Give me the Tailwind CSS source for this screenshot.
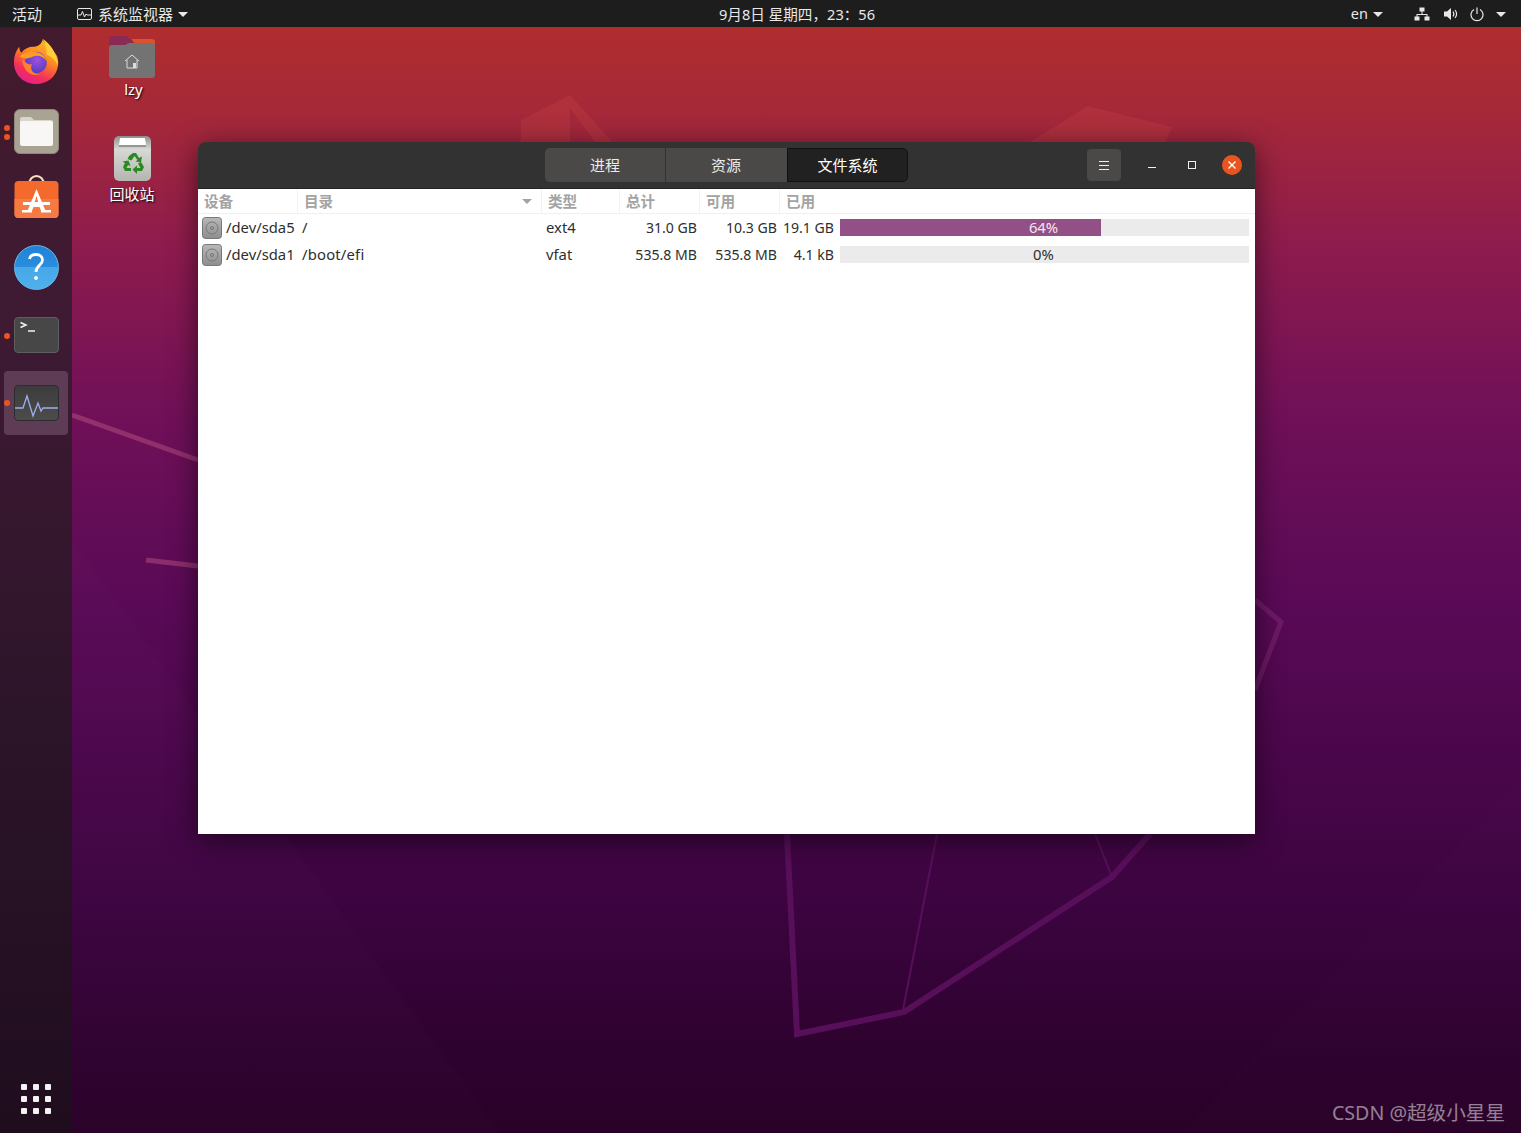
<!DOCTYPE html>
<html lang="zh-CN">
<head>
  <meta charset="UTF-8">
  <meta name="viewport" content="width=device-width, initial-scale=1">
  <title>系统监视器</title>
  <script src="https://cdn.jsdelivr.net/npm/@tailwindcss/browser@4"></script>
</head>
<body class="m-0 overflow-hidden">
<div class="relative w-[1521px] h-[1133px] overflow-hidden flex flex-col font-['Noto_Sans','Noto_Sans_CJK_SC',sans-serif] bg-[linear-gradient(180deg,#b42f2b_0px,#a4283a_120px,#8d1b4e_250px,#6f1058_420px,#5a0a56_600px,#480649_780px,#3c0440_900px,#2f0230_1040px,#290128_1133px)]">

  <!-- wallpaper lines -->
  <svg class="absolute inset-0" width="1521" height="1133" viewBox="0 0 1521 1133" fill="none">
    <path d="M521 142V120L570 95L612 142H595L570 108V142Z" fill="#c03c42" fill-opacity=".38"/>
    <path d="M1030 142L1088 106L1172 127L1165 142Z" fill="#c03c42" fill-opacity=".38"/>
    <path d="M72 415L198 460" stroke="#b04a80" stroke-opacity=".55" stroke-width="5"/>
    <path d="M146 560L198 566" stroke="#b04a80" stroke-opacity=".55" stroke-width="5"/>
    <path d="M1255 600L1281 622L1255 690" stroke="#8a2c7a" stroke-opacity=".45" stroke-width="5"/>
    <path d="M787 834L797 1034L904 1012L1112 877L1150 834" stroke="#580f5a" stroke-width="6"/>
    <path d="M937 834L903 1010" stroke="#580f5a" stroke-width="2"/>
    <path d="M1095 834L1112 877" stroke="#580f5a" stroke-width="2"/>
    <path d="M72 540L500 1133H72Z" fill="#fff" fill-opacity=".012"/>
    <path d="M1521 780L1180 1133H1521Z" fill="#fff" fill-opacity=".008"/>
  </svg>

  <!-- top bar -->
  <header class="relative z-10 h-[27px] pt-px bg-[#1d1d1d] text-[#e8e8e8] text-[15px] flex items-center shrink-0">
    <div class="w-[719px] flex items-center pl-3">
      <span>活动</span>
      <svg class="ml-[34px]" width="17" height="15" viewBox="0 0 17 15" fill="none" stroke="#e8e8e8">
        <rect x="1.5" y="1.5" width="14" height="11" rx="1.5"/>
        <path d="M1.5 8H5L6.5 4.5L8.5 10L10 7L11 8H15.5" stroke-width="1"/>
      </svg>
      <span class="ml-[5px]">系统监视器</span>
      <span class="ml-[5px] w-0 h-0 border-x-[5px] border-x-transparent border-t-[5px] border-t-[#e8e8e8]"></span>
    </div>
    <div class="mt-px whitespace-nowrap text-[14.6px]">9月8日 星期四，23：56</div>
    <div class="ml-auto flex items-center pr-[15px] text-[14.5px]">
      <span>en</span>
      <span class="ml-[5px] w-0 h-0 border-x-[5px] border-x-transparent border-t-[5px] border-t-[#e8e8e8]"></span>
      <svg class="ml-[31px]" width="16" height="14" viewBox="0 0 16 14" fill="#e8e8e8">
        <rect x="5.5" y="0.5" width="5" height="4"/><rect x="0.5" y="9.5" width="5" height="4"/><rect x="10.5" y="9.5" width="5" height="4"/>
        <path d="M7.5 4h1v3H13.5v3h-1V8h-9v2h-1V7h5z"/>
      </svg>
      <svg class="ml-[13px]" width="16" height="14" viewBox="0 0 16 14" fill="none">
        <path d="M1 4.5H4L8 1V13L4 9.5H1Z" fill="#e8e8e8"/>
        <path d="M10 4.5C11 6 11 8 10 9.5M12 3C14 5.5 14 8.5 12 11" stroke="#e8e8e8" stroke-width="1.2"/>
      </svg>
      <svg class="ml-[11px]" width="14" height="15" viewBox="0 0 14 15" fill="none" stroke="#e8e8e8" stroke-width="1.2">
        <path d="M4 2.5A6 6 0 1 0 10 2.5"/><path d="M7 0.5V7"/>
      </svg>
      <span class="ml-[12px] w-0 h-0 border-x-[5px] border-x-transparent border-t-[5px] border-t-[#e8e8e8]"></span>
    </div>
  </header>

  <div class="relative flex-1 flex min-h-0">
    <!-- dock -->
    <nav class="relative z-10 w-[72px] h-full pt-[2px] flex flex-col items-center bg-[linear-gradient(180deg,#431a2d_0px,#3e1a33_300px,#2c1429_700px,#1f0d1e_1106px)]">
      <div class="w-[64px] h-[68px] flex items-center justify-center">
        <svg class="mb-[2px]" width="46" height="46" viewBox="0 0 46 47">
          <defs>
            <linearGradient id="fx" x1="0.8" y1="0" x2="0.3" y2="1"><stop offset="0" stop-color="#ffc02e"/><stop offset=".4" stop-color="#ff8a1f"/><stop offset=".75" stop-color="#f4305a"/><stop offset="1" stop-color="#e61e8c"/></linearGradient>
            <radialGradient id="fxg" cx=".55" cy=".4" r=".7"><stop offset="0" stop-color="#a050e0"/><stop offset="1" stop-color="#4a3ab8"/></radialGradient>
          </defs>
          <path d="M30 0C31 5 38 9 43 15C46 19 46 24 45.500 27C44 39 34 46 23 46C10 46 0 36 0.500 23C0.700 17 3 11 6 8C6 11 7 13 8 14C11 10 16 8 20 8C25 8 29 5 30 0Z" fill="url(#fx)"/>
          <circle cx="23" cy="24" r="11" fill="url(#fxg)"/>
          <path d="M30 0C38 5 44 14 45.500 27C43 22 39 18 34 16C34 11 33 5 30 0Z" fill="#ffcf3a"/>
          <path d="M6 18C11 13 19 12 26 14C30 15.500 33 18 34 23C31 18 25 16 20 18C16 20 11 21 6 18Z" fill="#ff9c24"/>
          <path d="M9 20C12 25 16 27 19 25.500C16 31 20 36 27 36C20 39 9 34 9 20Z" fill="#ff8030"/>
        </svg>
      </div>
      <div class="relative w-[64px] h-[68px] flex items-center justify-center">
        <span class="absolute left-[0px] top-[28px] w-[6px] h-[6px] rounded-full bg-[#e9541f]"></span>
        <span class="absolute left-[0px] top-[37px] w-[6px] h-[6px] rounded-full bg-[#e9541f]"></span>
        <div class="w-[45px] h-[45px] rounded-[6px] bg-[#a9a393] border border-[#8d8878] flex items-center justify-center">
          <svg width="33" height="29" viewBox="0 0 33 29">
            <path d="M2 0H11L14 3H31A2 2 0 0 1 33 5V10H0V2A2 2 0 0 1 2 0Z" fill="#d9d6cb"/>
            <path d="M2 4H31A2 2 0 0 1 33 6V27A2 2 0 0 1 31 29H2A2 2 0 0 1 0 27V6A2 2 0 0 1 2 4Z" fill="#f8f7f5"/>
          </svg>
        </div>
      </div>
      <div class="w-[64px] h-[68px] flex items-center justify-center">
        <svg class="mb-[4px]" width="45" height="44" viewBox="0 0 45 44">
          <path d="M15 10C15 -2 30 -2 30 10" fill="none" stroke="#f8e0c4" stroke-width="2"/>
          <rect x="0.500" y="6" width="44" height="37" rx="4" fill="#f4692c"/>
          <path d="M0.500 24H44.500V39A4 4 0 0 1 40.500 43H4.500A4 4 0 0 1 0.500 39Z" fill="#f67a42"/>
          <path d="M22.500 14L32 37H27.500L25.500 32H19.500L17.500 37H13ZM22.500 21L20.800 27H24.200Z" fill="#fff"/>
          <rect x="9" y="27" width="27" height="3" fill="#fff"/>
          <rect x="8" y="35" width="10" height="2.500" fill="#fff"/><rect x="27" y="35" width="10" height="2.500" fill="#fff"/>
        </svg>
      </div>
      <div class="w-[64px] h-[68px] flex items-center justify-center">
        <div class="w-[45px] h-[45px] rounded-full bg-[linear-gradient(180deg,#2182d6_0%,#2a8ddd_50%,#46a8e8_50%,#4fb0ec_100%)] border border-[#6db6e8] flex items-center justify-center">
          <svg width="16" height="28" viewBox="0 0 16 28" fill="none" stroke="#fff" stroke-width="2.800">
            <path d="M1.500 6C2 3 4.500 1.500 8 1.500C12 1.500 14.500 3.800 14.500 7C14.500 12 8 12.500 8 19"/>
            <circle cx="8" cy="25" r="1.300" fill="#fff" stroke-width="1.200"/>
          </svg>
        </div>
      </div>
      <div class="relative w-[64px] h-[68px] flex items-center justify-center">
        <span class="absolute left-[0px] top-[32px] w-[6px] h-[6px] rounded-full bg-[#e9541f]"></span>
        <div class="w-[45px] h-[36px] rounded-[4px] bg-[#474747] border border-[#5e5e5e]">
          <svg width="22" height="16" viewBox="0 0 22 16" fill="none" stroke="#f2f2f2" stroke-width="1.500">
            <path d="M5.500 4.500L11 7L5.500 9.500"/><path d="M13 13H20"/>
          </svg>
        </div>
      </div>
      <div class="relative w-[64px] h-[64px] my-[2px] rounded-[4px] bg-[#5f3c55] flex items-center justify-center">
        <span class="absolute left-[0px] top-[29px] w-[6px] h-[6px] rounded-full bg-[#e9541f]"></span>
        <div class="w-[45px] h-[36px] rounded-[4px] border border-[#2d2d2d] bg-[linear-gradient(180deg,#3c3c3c,#4c4c4c)]">
          <svg width="43" height="34" viewBox="0 0 43 34" fill="none" stroke="#a0aef0" stroke-width="1.300">
            <path d="M0 22H8L12 10L18 30L23 17L26 25L28 22H43"/>
          </svg>
        </div>
      </div>
      <div class="mt-auto mb-[19px] grid grid-cols-3 gap-[6px]">
        <span class="w-[6px] h-[6px] rounded-[1px] bg-[#f2f2f2]"></span><span class="w-[6px] h-[6px] rounded-[1px] bg-[#f2f2f2]"></span><span class="w-[6px] h-[6px] rounded-[1px] bg-[#f2f2f2]"></span>
        <span class="w-[6px] h-[6px] rounded-[1px] bg-[#f2f2f2]"></span><span class="w-[6px] h-[6px] rounded-[1px] bg-[#f2f2f2]"></span><span class="w-[6px] h-[6px] rounded-[1px] bg-[#f2f2f2]"></span>
        <span class="w-[6px] h-[6px] rounded-[1px] bg-[#f2f2f2]"></span><span class="w-[6px] h-[6px] rounded-[1px] bg-[#f2f2f2]"></span><span class="w-[6px] h-[6px] rounded-[1px] bg-[#f2f2f2]"></span>
      </div>
    </nav>

    <!-- desktop icons -->
    <div class="absolute left-[102px] top-[9px] w-[60px] flex flex-col items-center text-white text-[15px] [text-shadow:1px_1px_2px_#000]">
      <svg width="46" height="42" viewBox="0 0 46 42">
        <path d="M3 0H17L21 3H43A3 3 0 0 1 46 6V12H0V3A3 3 0 0 1 3 0Z" fill="#8a2a55"/>
        <path d="M22 3H43A3 3 0 0 1 46 6V10H28Z" fill="#d9532c"/>
        <path d="M3 9H16L20 7H43A3 3 0 0 1 46 10V39A3 3 0 0 1 43 42H3A3 3 0 0 1 0 39V12A3 3 0 0 1 3 9Z" fill="#737373"/>
        <path d="M16 25L23 19L30 25M18 24V32H28V24" fill="none" stroke="#ddd" stroke-width="1"/>
        <rect x="24" y="27" width="3" height="5" fill="#ddd"/>
      </svg>
      <span class="ml-[3px] mt-[1px] leading-[20px]">lzy</span>
    </div>
    <div class="absolute left-[102px] top-[109px] w-[60px] flex flex-col items-center text-white text-[15px] [text-shadow:1px_1px_2px_#000]">
      <svg width="37" height="45" viewBox="0 0 37 45">
        <defs><linearGradient id="tr" x1="0" y1="0" x2="0" y2="1"><stop offset="0" stop-color="#8e8e8a"/><stop offset=".3" stop-color="#d8d8d4"/><stop offset="1" stop-color="#b4b4b0"/></linearGradient></defs>
        <rect width="37" height="45" rx="5" fill="url(#tr)"/>
        <path d="M5 9L6 2H31L32 9Z" fill="#fff"/><path d="M5 9H32V11H5Z" fill="#666" fill-opacity=".5"/>
        <g fill="#2a8a22">
          <path d="M15 20L19 17H22L25 22L28 20.500L27 26.500L21.500 25.500L23.500 24L20.500 20L17.500 24.500L13.500 23Z"/>
          <path d="M27 26L30 31L28 35H23V38L18.500 33.500L23 29.500V32H26.500L24 27.500Z"/>
          <path d="M17 35H11L9 31L11 27L8.500 25.500L14.500 24.500L16.500 30L14 29L12.500 32L17 32Z"/>
        </g>
      </svg>
      <span class="mt-[3px] leading-[20px] whitespace-nowrap">回收站</span>
    </div>

    <!-- window -->
    <main class="absolute left-[198px] top-[115px] w-[1057px] h-[692px] flex flex-col rounded-t-[8px] shadow-[0_6px_28px_rgba(0,0,0,0.55)] overflow-hidden">
      <div class="h-[47px] shrink-0 flex items-center bg-[#333232] border-b border-[#232323] text-[#ececec] text-[15px]">
        <div class="ml-[347px] w-[363px] h-[34px] flex rounded-[5px] overflow-hidden">
          <button class="w-[121px] bg-[#4a4947] border-r border-[#333232]">进程</button>
          <button class="w-[121px] bg-[#4a4947] pr-px">资源</button>
          <button class="w-[121px] bg-[#212121] border border-[#111] rounded-r-[5px] text-white">文件系统</button>
        </div>
        <button class="ml-[179px] w-[34px] h-[32px] rounded-[4px] bg-[#4a4947] flex flex-col items-center justify-center gap-[3px]">
          <span class="w-[10px] h-px bg-[#f0f0f0]"></span><span class="w-[10px] h-px bg-[#f0f0f0]"></span><span class="w-[10px] h-px bg-[#f0f0f0]"></span>
        </button>
        <span class="ml-[27px] w-[8px] h-px bg-[#f0f0f0] mt-[4px]"></span>
        <span class="ml-[32px] w-[8px] h-[8px] border border-[#f0f0f0]"></span>
        <span class="ml-[26px] w-[20px] h-[20px] rounded-full bg-[#e9541f] flex items-center justify-center">
          <svg width="10" height="10" viewBox="0 0 10 10" stroke="#fff" stroke-width="1.400"><path d="M1.500 1.500L8.500 8.500M8.500 1.500L1.500 8.500"/></svg>
        </span>
      </div>

      <div class="flex-1 bg-white text-[14.8px] text-[#2e2e2e]">
        <div class="h-[25px] grid grid-cols-[100px_244px_78px_80px_80px_1fr] border-b border-[#f0f0f0] font-bold text-[14.6px] text-[#a3a3a3] leading-[25px]">
          <div class="pl-[6px] border-r border-[#f2f2f2]">设备</div>
          <div class="pl-[6px] pr-[9px] border-r border-[#f2f2f2] flex items-center justify-between">目录<span class="w-0 h-0 border-x-[5px] border-x-transparent border-t-[5px] border-t-[#a3a3a3]"></span></div>
          <div class="pl-[6px] border-r border-[#f2f2f2]">类型</div>
          <div class="pl-[6px] border-r border-[#f2f2f2]">总计</div>
          <div class="pl-[6px] border-r border-[#f2f2f2]">可用</div>
          <div class="pl-[6px]">已用</div>
        </div>

        <div class="h-[27px] grid grid-cols-[99px_244px_78px_80px_80px_58px_1fr] items-center">
          <div class="pl-[4px] flex items-center gap-[4px] whitespace-nowrap">
            <svg class="shrink-0" width="20" height="22" viewBox="0 0 20 22"><defs><linearGradient id="dk" x1="0" y1="0" x2="0" y2="1"><stop offset="0" stop-color="#b8b8b8"/><stop offset="1" stop-color="#8e8e8e"/></linearGradient></defs><rect x=".5" y=".5" width="19" height="21" rx="3" fill="url(#dk)" stroke="#777"/><circle cx="10" cy="11" r="6" fill="none" stroke="#777"/><circle cx="10" cy="11" r="1.500" fill="none" stroke="#777"/></svg>
            <span>/dev/sda5</span>
          </div>
          <div class="pl-[5px]">/</div>
          <div class="pl-[5px]">ext4</div>
          <div class="pr-[2px] text-right text-[14.1px]">31.0 GB</div>
          <div class="pr-[2px] text-right text-[14.1px]">10.3 GB</div>
          <div class="pr-[3px] text-right text-[14.1px] whitespace-nowrap">19.1 GB</div>
          <div class="relative ml-[3px] mr-[6px] h-[17px] bg-[#ebebeb] flex items-center justify-center">
            <div class="absolute inset-y-0 left-0 w-[261px] bg-[#925087]"></div>
            <span class="relative pr-[2px] text-[#f2e6f0]">64%</span>
          </div>
        </div>
        <div class="h-[27px] grid grid-cols-[99px_244px_78px_80px_80px_58px_1fr] items-center">
          <div class="pl-[4px] flex items-center gap-[4px] whitespace-nowrap">
            <svg class="shrink-0" width="20" height="22" viewBox="0 0 20 22"><rect x=".5" y=".5" width="19" height="21" rx="3" fill="url(#dk)" stroke="#777"/><circle cx="10" cy="11" r="6" fill="none" stroke="#777"/><circle cx="10" cy="11" r="1.500" fill="none" stroke="#777"/></svg>
            <span>/dev/sda1</span>
          </div>
          <div class="pl-[5px] tracking-[0.2px]">/boot/efi</div>
          <div class="pl-[5px]">vfat</div>
          <div class="pr-[2px] text-right text-[14.1px]">535.8 MB</div>
          <div class="pr-[2px] text-right text-[14.1px]">535.8 MB</div>
          <div class="pr-[3px] text-right text-[14.1px]">4.1 kB</div>
          <div class="ml-[3px] mr-[6px] h-[17px] bg-[#ebebeb] flex items-center justify-center"><span class="pr-[2px]">0%</span></div>
        </div>
      </div>
    </main>

    <span class="absolute right-[16px] bottom-[6px] text-[19.6px] leading-[28px] text-white/50">CSDN @超级小星星</span>
  </div>
</div>
</body>
</html>
